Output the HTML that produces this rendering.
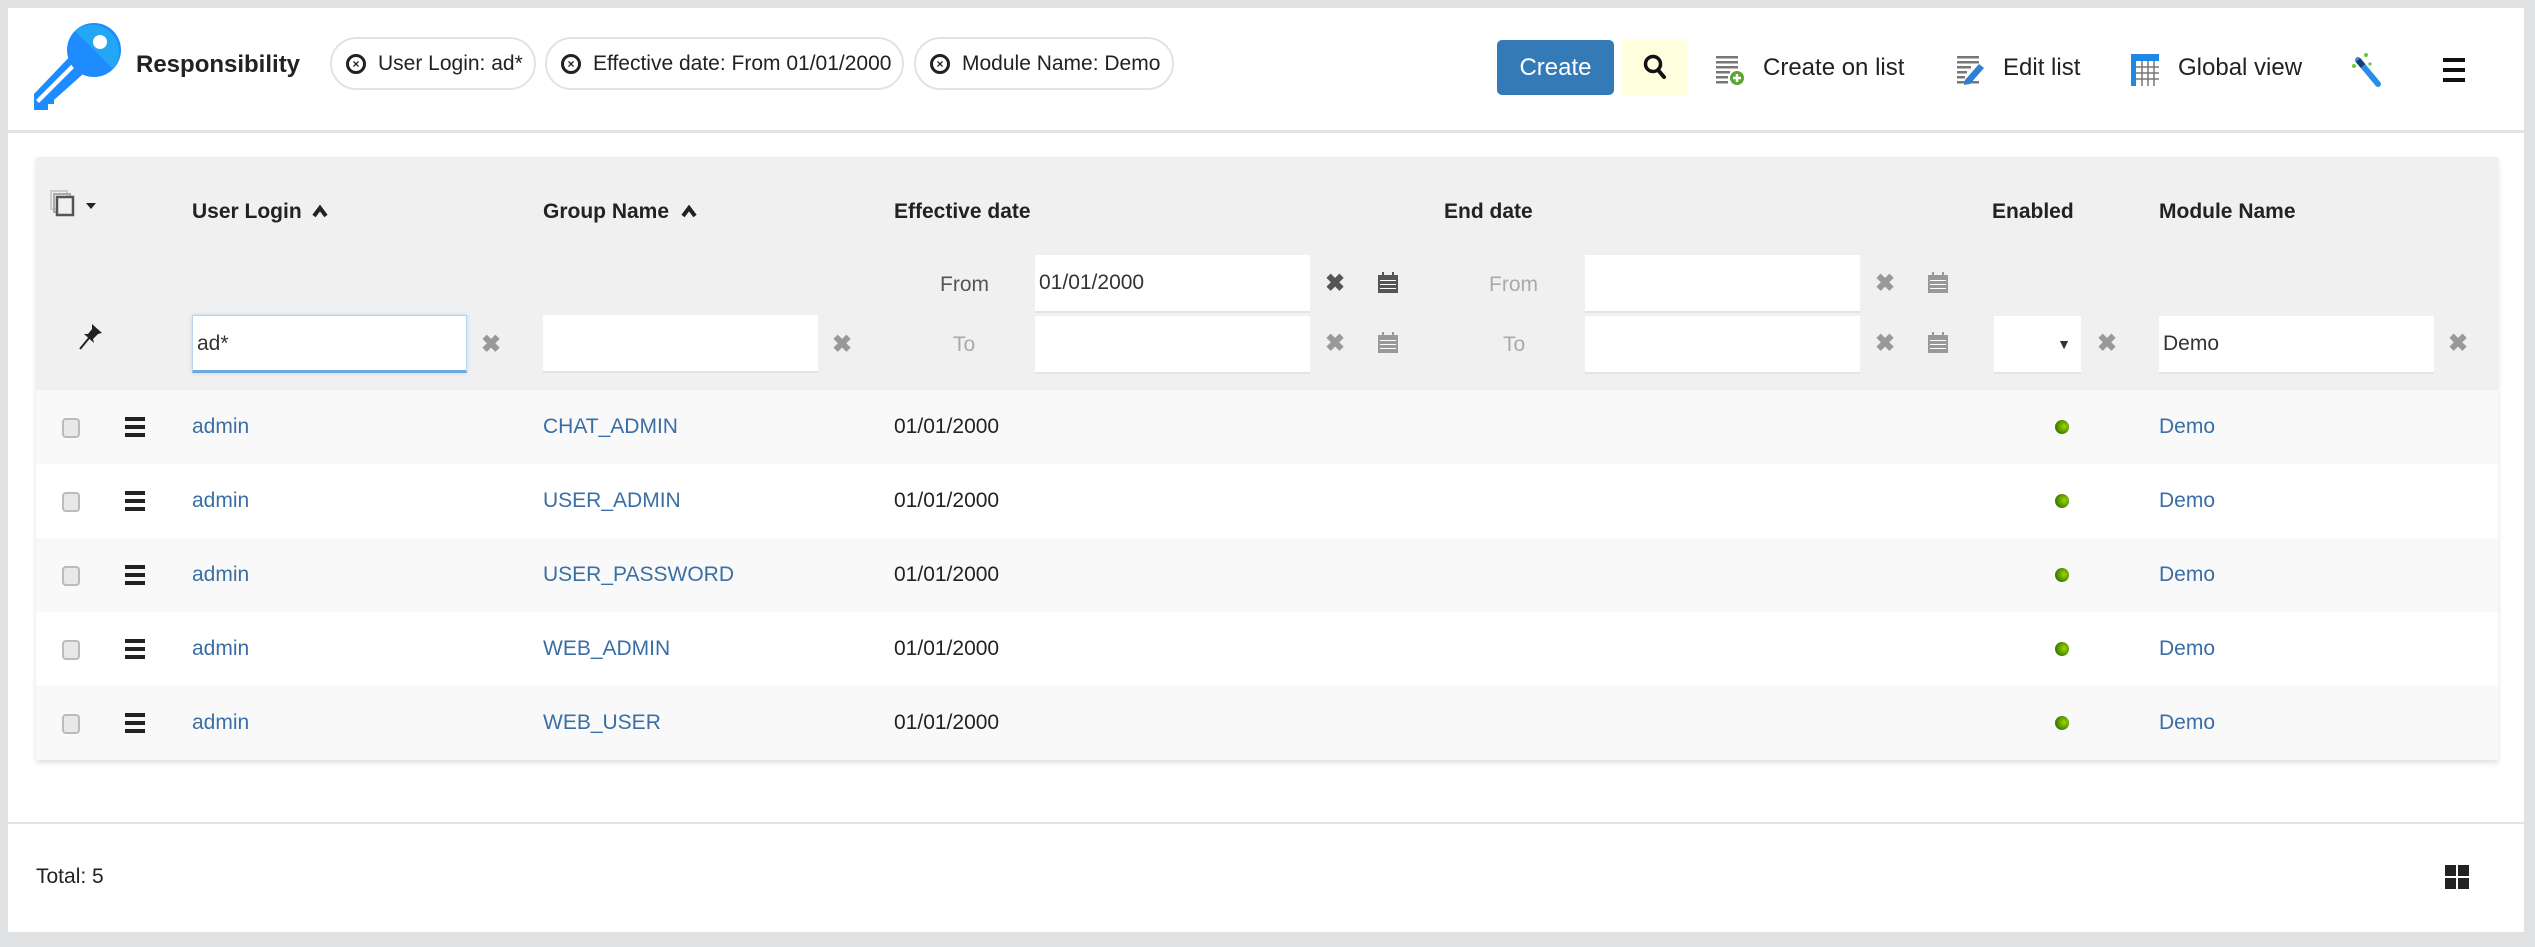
<!DOCTYPE html>
<html><head><meta charset="utf-8">
<style>
*{box-sizing:border-box;margin:0;padding:0}
body{width:2535px;height:947px;background:#dfe1e3;font-family:"Liberation Sans",Arial,sans-serif;position:relative;overflow:hidden;color:#222}
.a{position:absolute}
.panel{left:8px;top:8px;width:2516px;height:924px;background:#fff}
.pill{position:absolute;top:37px;height:53px;border:2px solid #e2e2e2;border-radius:27px;font-size:21px;line-height:49px;padding-left:46px;color:#222}
.pill .ic{position:absolute;left:14px;top:15px;width:20px;height:20px;border:3px solid #222;border-radius:50%;font-size:12px;line-height:14px;text-align:center;font-weight:bold}
.tb{font-size:24px;color:#222;top:54px}
.th{font-weight:bold;font-size:21px;top:200px}
.inp{position:absolute;background:#fff;height:58px;border-bottom:2px solid #e4e4e4;font-size:21px;line-height:56px;padding-left:4px;color:#333}
.x{position:absolute;font-size:24px;font-weight:bold;color:#999}
.lbl{position:absolute;font-size:21px;color:#666}
.row{position:absolute;left:36px;width:2462px;height:74px;font-size:21px;line-height:74px}
.row span{position:absolute}
.lk{color:#3a6ea5}
.cb{position:absolute;left:26px;top:28px;width:18px;height:20px;border:2px solid #bbb;border-radius:4px;background:#e8e8e8}
.hb{position:absolute;left:89px;top:27px;width:20px;height:20px}
.hb i{display:block;height:4px;background:#222;margin-bottom:4px}
.dot{position:absolute;left:2019px;top:30px;width:14px;height:14px;border-radius:50%;background:radial-gradient(circle at 65% 45%,#9fd400,#3a7d00 70%)}
</style></head><body>
<div class="a panel"></div>
<!-- logo -->
<svg class="a" style="left:30px;top:20px" width="95" height="90" viewBox="0 0 95 90">
<polygon points="4,74 46,30 62,46 24,80 24,84 18,84 18,90 4,90" fill="#1e8cff"/>
<polygon points="6,80 48,38 51,41 9,83" fill="#fff"/>
<circle cx="64" cy="30" r="27" fill="#1e8cff"/>
<path d="M45 11 A27 27 0 0 1 83 49 Z" fill="#22a6f5"/>
<circle cx="70" cy="22" r="7" fill="#fff"/>
</svg>
<div class="a" style="left:136px;top:51px;font-size:24px;font-weight:bold">Responsibility</div>
<div class="pill" style="left:330px;width:206px"><span class="ic">×</span>User Login: ad*</div>
<div class="pill" style="left:545px;width:359px"><span class="ic">×</span>Effective date: From 01/01/2000</div>
<div class="pill" style="left:914px;width:260px"><span class="ic">×</span>Module Name: Demo</div>
<div class="a" style="left:1497px;top:40px;width:117px;height:55px;background:#337ab7;border-radius:5px;color:#fff;font-size:24px;line-height:55px;text-align:center">Create</div>
<div class="a" style="left:1622px;top:39px;width:66px;height:57px;background:#fffedd"></div>
<svg class="a" style="left:1643px;top:54px" width="24" height="26" viewBox="0 0 24 26"><circle cx="10" cy="10" r="7.5" fill="none" stroke="#111" stroke-width="3.5"/><line x1="15" y1="16" x2="21" y2="23" stroke="#111" stroke-width="4" stroke-linecap="round"/></svg>
<svg class="a" style="left:1716px;top:56px" width="30" height="30" viewBox="0 0 30 30"><g fill="#777"><rect x="0" y="0" width="22" height="2.5"/><rect x="0" y="5" width="22" height="2.5"/><rect x="0" y="10" width="22" height="2.5"/><rect x="0" y="15" width="14" height="2.5"/><rect x="0" y="20" width="12" height="2.5"/><rect x="0" y="25" width="12" height="2.5"/></g><circle cx="21" cy="22" r="7" fill="#5aa832"/><path d="M21 18v8M17 22h8" stroke="#fff" stroke-width="2.5"/></svg>
<div class="a tb" style="left:1763px">Create on list</div>
<svg class="a" style="left:1957px;top:56px" width="30" height="30" viewBox="0 0 30 30"><g fill="#777"><rect x="0" y="0" width="22" height="2.5"/><rect x="0" y="5" width="22" height="2.5"/><rect x="0" y="10" width="14" height="2.5"/><rect x="0" y="15" width="10" height="2.5"/><rect x="0" y="20" width="8" height="2.5"/><rect x="0" y="25" width="22" height="2.5"/></g><path d="M8 24 L22 8 L27 12 L13 28 L7 29 Z" fill="#2c7fd6"/></svg>
<div class="a tb" style="left:2003px">Edit list</div>
<svg class="a" style="left:2131px;top:54px" width="28" height="32" viewBox="0 0 28 32"><rect x="0" y="0" width="28" height="32" fill="#1e88e5"/><rect x="5" y="7" width="23" height="25" fill="#fff"/><g stroke="#777" stroke-width="1.5"><path d="M5 13h23M5 19h23M5 25h23M11 7v25M17 7v25M23 7v25"/></g></svg>
<div class="a tb" style="left:2178px">Global view</div>
<svg class="a" style="left:2350px;top:52px" width="32" height="36" viewBox="0 0 32 36"><path d="M8 8 L28 32" stroke="#2a8ee8" stroke-width="6" stroke-linecap="round"/><path d="M8 8 L13 14" stroke="#1a3f6a" stroke-width="6"/><circle cx="4" cy="14" r="2" fill="#6c3"/><circle cx="16" cy="3" r="2" fill="#6c3"/><circle cx="20" cy="12" r="1.6" fill="#6c3"/></svg>
<div class="a" style="left:2443px;top:58px;width:22px"><div style="height:4px;background:#111;margin-bottom:6px"></div><div style="height:4px;background:#111;margin-bottom:6px"></div><div style="height:4px;background:#111"></div></div>
<div class="a" style="left:8px;top:130px;width:2516px;height:3px;background:#e3e3e3"></div>

<div class="a" style="left:36px;top:157px;width:2462px;height:603px;background:#fff;box-shadow:0 3px 5px rgba(0,0,0,.12);border:1px solid #e6e6e6"></div>
<div class="a" style="left:36px;top:157px;width:2462px;height:233px;background:#f0f0f0"></div>
<svg class="a" style="left:50px;top:190px" width="55" height="30" viewBox="0 0 55 30"><rect x="1" y="1" width="16" height="18" fill="none" stroke="#ccc" stroke-width="2"/><rect x="4" y="4" width="16" height="18" fill="none" stroke="#aaa" stroke-width="2"/><rect x="7" y="7" width="16" height="18" fill="#f0f0f0" stroke="#555" stroke-width="2.5"/><path d="M36 13h10l-5 6z" fill="#222"/></svg>
<div class="a th" style="left:192px">User Login</div>
<svg class="a" style="left:311px;top:203px" width="18" height="16" viewBox="0 0 18 16"><path d="M3 13 L9 5 L15 13" fill="none" stroke="#222" stroke-width="4"/></svg>
<div class="a th" style="left:543px">Group Name</div>
<svg class="a" style="left:680px;top:203px" width="18" height="16" viewBox="0 0 18 16"><path d="M3 13 L9 5 L15 13" fill="none" stroke="#222" stroke-width="4"/></svg>
<div class="a th" style="left:894px">Effective date</div>
<div class="a th" style="left:1444px">End date</div>
<div class="a th" style="left:1992px">Enabled</div>
<div class="a th" style="left:2159px">Module Name</div>
<svg class="a" style="left:78px;top:322px" width="26" height="30" viewBox="0 0 26 30"><path d="M14 2 L24 11 L20 12 L15 17 L16 21 L6 12 L10 12 L14 7 Z" fill="#222"/><line x1="11" y1="16" x2="2" y2="27" stroke="#222" stroke-width="2"/></svg>

<div class="inp" style="left:192px;top:315px;width:275px;border:1px solid #b8d4ee;border-bottom:3px solid #6fa8dc;box-shadow:0 0 4px #b8d4ee">ad*</div>
<div class="x" style="left:481px;top:330px">✖</div>
<div class="inp" style="left:543px;top:315px;width:275px"></div>
<div class="x" style="left:832px;top:330px">✖</div>

<div class="lbl" style="left:940px;top:273px;color:#555">From</div>
<div class="lbl" style="left:953px;top:333px;color:#aaa">To</div>
<div class="inp" style="left:1035px;top:255px;width:275px">01/01/2000</div>
<div class="inp" style="left:1035px;top:316px;width:275px"></div>
<div class="x" style="left:1325px;top:269px;color:#555">✖</div>
<div class="x" style="left:1325px;top:329px">✖</div>
<svg class="a" style="left:1378px;top:272px" width="20" height="21" viewBox="0 0 20 21"><rect x="0" y="3" width="20" height="18" fill="#555"/><g fill="#fff"><rect x="2" y="8" width="16" height="1"/><rect x="2" y="12" width="16" height="1"/><rect x="2" y="16" width="16" height="1"/></g><rect x="4" y="0" width="2" height="4" fill="#555"/><rect x="14" y="0" width="2" height="4" fill="#555"/></svg>
<svg class="a" style="left:1378px;top:332px" width="20" height="21" viewBox="0 0 20 21"><rect x="0" y="3" width="20" height="18" fill="#999"/><g fill="#fff"><rect x="2" y="8" width="16" height="1"/><rect x="2" y="12" width="16" height="1"/><rect x="2" y="16" width="16" height="1"/></g><rect x="4" y="0" width="2" height="4" fill="#999"/><rect x="14" y="0" width="2" height="4" fill="#999"/></svg>

<div class="lbl" style="left:1489px;top:273px;color:#aaa">From</div>
<div class="lbl" style="left:1503px;top:333px;color:#aaa">To</div>
<div class="inp" style="left:1585px;top:255px;width:275px"></div>
<div class="inp" style="left:1585px;top:316px;width:275px"></div>
<div class="x" style="left:1875px;top:269px">✖</div>
<div class="x" style="left:1875px;top:329px">✖</div>
<svg class="a" style="left:1928px;top:272px" width="20" height="21" viewBox="0 0 20 21"><rect x="0" y="3" width="20" height="18" fill="#999"/><g fill="#fff"><rect x="2" y="8" width="16" height="1"/><rect x="2" y="12" width="16" height="1"/><rect x="2" y="16" width="16" height="1"/></g><rect x="4" y="0" width="2" height="4" fill="#999"/><rect x="14" y="0" width="2" height="4" fill="#999"/></svg>
<svg class="a" style="left:1928px;top:332px" width="20" height="21" viewBox="0 0 20 21"><rect x="0" y="3" width="20" height="18" fill="#999"/><g fill="#fff"><rect x="2" y="8" width="16" height="1"/><rect x="2" y="12" width="16" height="1"/><rect x="2" y="16" width="16" height="1"/></g><rect x="4" y="0" width="2" height="4" fill="#999"/><rect x="14" y="0" width="2" height="4" fill="#999"/></svg>

<div class="inp" style="left:1994px;top:316px;width:87px"><span style="position:absolute;right:10px;top:0;font-size:14px">▼</span></div>
<div class="x" style="left:2097px;top:329px">✖</div>
<div class="inp" style="left:2159px;top:316px;width:275px">Demo</div>
<div class="x" style="left:2448px;top:329px">✖</div>

<div class="row" style="top:390px;background:#f9f9f9"><div class="cb"></div><div class="hb"><i></i><i></i><i></i></div><span class="lk" style="left:156px">admin</span><span class="lk" style="left:507px">CHAT_ADMIN</span><span style="left:858px">01/01/2000</span><div class="dot"></div><span class="lk" style="left:2123px">Demo</span></div>
<div class="row" style="top:464px;background:#fff"><div class="cb"></div><div class="hb"><i></i><i></i><i></i></div><span class="lk" style="left:156px">admin</span><span class="lk" style="left:507px">USER_ADMIN</span><span style="left:858px">01/01/2000</span><div class="dot"></div><span class="lk" style="left:2123px">Demo</span></div>
<div class="row" style="top:538px;background:#f9f9f9"><div class="cb"></div><div class="hb"><i></i><i></i><i></i></div><span class="lk" style="left:156px">admin</span><span class="lk" style="left:507px">USER_PASSWORD</span><span style="left:858px">01/01/2000</span><div class="dot"></div><span class="lk" style="left:2123px">Demo</span></div>
<div class="row" style="top:612px;background:#fff"><div class="cb"></div><div class="hb"><i></i><i></i><i></i></div><span class="lk" style="left:156px">admin</span><span class="lk" style="left:507px">WEB_ADMIN</span><span style="left:858px">01/01/2000</span><div class="dot"></div><span class="lk" style="left:2123px">Demo</span></div>
<div class="row" style="top:686px;background:#f9f9f9"><div class="cb"></div><div class="hb"><i></i><i></i><i></i></div><span class="lk" style="left:156px">admin</span><span class="lk" style="left:507px">WEB_USER</span><span style="left:858px">01/01/2000</span><div class="dot"></div><span class="lk" style="left:2123px">Demo</span></div>

<div class="a" style="left:8px;top:822px;width:2516px;height:2px;background:#e3e3e3"></div>
<div class="a" style="left:36px;top:865px;font-size:21px">Total: 5</div>
<div class="a" style="left:2445px;top:865px;width:24px;height:24px"><div class="a" style="left:0;top:0;width:11px;height:11px;background:#222"></div><div class="a" style="left:13px;top:0;width:11px;height:11px;background:#222"></div><div class="a" style="left:0;top:13px;width:11px;height:11px;background:#222"></div><div class="a" style="left:13px;top:13px;width:11px;height:11px;background:#222"></div></div>
</body></html>
